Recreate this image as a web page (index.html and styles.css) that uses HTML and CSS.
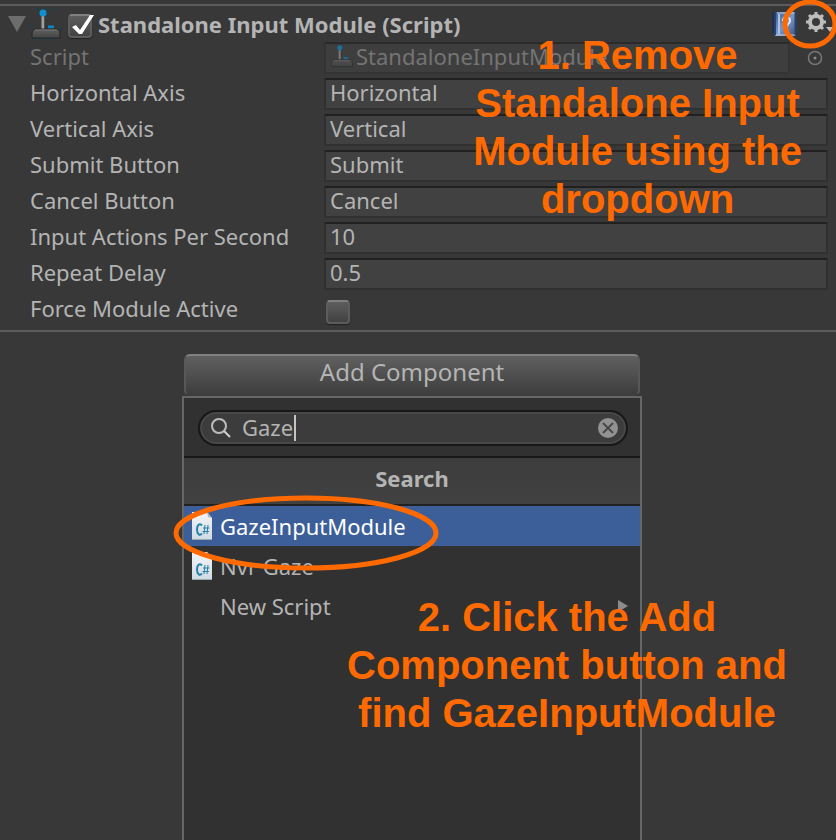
FILE: index.html
```html
<!DOCTYPE html>
<html lang="en">
<head>
<meta charset="utf-8">
<meta name="viewport" content="width=device-width, initial-scale=1">
<title>Inspector</title>
<link rel="stylesheet" href="styles.css">
</head>
<body>
<svg class="symbols" aria-hidden="true">
  <defs>
    <linearGradient id="base" x1="0" y1="0" x2="0" y2="1"><stop offset="0" stop-color="#606060"/><stop offset="1" stop-color="#454545"/></linearGradient>
    <linearGradient id="page" x1="0" y1="0" x2="0" y2="1"><stop offset="0" stop-color="#f4f6f7"/><stop offset="1" stop-color="#cfdae2"/></linearGradient>
    <linearGradient id="book" x1="0" y1="0" x2="1" y2="1"><stop offset="0" stop-color="#3f5c8e"/><stop offset=".5" stop-color="#7897c6"/><stop offset="1" stop-color="#3a5282"/></linearGradient>
    <symbol id="joystick" viewBox="0 0 32 32">
      <path d="M5 1h22M1 16v5M31 18v4M3 31h24" stroke="#174252" stroke-width="1" stroke-dasharray="5 3"/>
      <path d="M13 8v13" stroke="#a0a0a0" stroke-width="3"/>
      <path d="M15 8v12" stroke="#333" stroke-width="1"/>
      <circle cx="13" cy="5" r="3.500" fill="#1190d0"/>
      <path d="M18 19h6" stroke="#0b88c4" stroke-width="3"/>
      <path d="M2 30v-5q0-4 4-4h20q4 0 4 4v5z" fill="url(#base)" stroke="#252525" stroke-width="1"/>
      <path d="M5 22h22" stroke="#777" stroke-width="1"/>
    </symbol>
    <symbol id="script" viewBox="0 0 20 28">
      <path d="M0 0h15l5 6v22H0z" fill="url(#page)"/>
      <path d="M15 0l5 6-4-1z" fill="#a9b4bd"/>
      <path d="M0 27.500h20" stroke="#9eaab3"/>
      <path d="M10 13.500C8 11 5 12.500 5 17.500s3 6.500 5 4" fill="none" stroke="#2580ab" stroke-width="2"/>
      <path d="M13 13l-1 9M16 13l-1 9M11 16h6.500M10.500 19.500h6.500" fill="none" stroke="#2580ab" stroke-width="1"/>
    </symbol>
  </defs>
</svg>

<main class="inspector">
  <section class="component">
    <header class="component-head">
      <button class="icon-button fold" type="button" aria-label="Collapse component">
        <svg width="18" height="16" viewBox="0 0 18 16"><path d="M0 0h18L9 16z" fill="#6d6d6d"/></svg>
      </button>
      <svg class="joystick" aria-hidden="true"><use href="#joystick"/></svg>
      <label class="check">
        <input type="checkbox" id="enabled" checked aria-label="Component enabled">
        <svg class="tick" width="24" height="24" viewBox="0 0 24 24" aria-hidden="true"><path d="M2 13l4-2 4 5L20 1h4L12 20H9z" fill="#fff"/></svg>
      </label>
      <h1>Standalone Input Module (Script)</h1>
      <button class="icon-button" type="button" aria-label="Help">
        <svg width="26" height="26" viewBox="0 0 26 26"><path d="M1 2l4-2v25l-4-3z" fill="#1f3150"/><rect x="4" y="1" width="21" height="24" fill="url(#book)"/><path d="M6 2h19M5 24h19" stroke="#c2d5ed" stroke-width="1"/><path d="M4 1v23M24.500 1v23" stroke="#29406a" stroke-width="2"/><path d="M8 3v20" stroke="#a9c3e6" stroke-width="2"/><path d="M12 10c0-5 7-5 7 0 0 3-3 2-3 6M16 18v3" fill="none" stroke="#dce8fa" stroke-width="2"/></svg>
      </button>
      <button class="icon-button gear" type="button" aria-label="Component options">
        <svg width="28" height="24" viewBox="0 0 28 24"><g fill="none" stroke="#bdbdbd"><circle cx="11" cy="10" r="6" stroke-width="4"/><path d="M11 0v4M11 16v4M1 10h4M17 10h4M4 3l3 3M15 14l3 3M4 17l3-3M15 6l3-3" stroke-width="3"/></g><path d="M21 15h7l-3 5z" fill="#bdbdbd"/></svg>
      </button>
      <svg class="ring" width="56" height="50" viewBox="0 0 56 50" aria-hidden="true"><ellipse cx="28" cy="25" rx="25" ry="22" fill="none" stroke="#ff6a00" stroke-width="5"/></svg>
    </header>

    <div class="row muted">
      <span>Script</span>
      <div class="object">
        <div class="field object-field"><svg class="joystick small" aria-hidden="true"><use href="#joystick"/></svg><span>StandaloneInputModule</span></div>
        <button class="icon-button picker" type="button" aria-label="Select script">
          <svg width="16" height="16" viewBox="0 0 16 16"><circle cx="8" cy="8" r="6.500" fill="none" stroke="#777" stroke-width="1.500"/><circle cx="8" cy="8" r="1.500" fill="#888"/></svg>
        </button>
      </div>
    </div>
    <div class="row"><label for="horizontal">Horizontal Axis</label><input class="field" id="horizontal" value="Horizontal"></div>
    <div class="row"><label for="vertical">Vertical Axis</label><input class="field" id="vertical" value="Vertical"></div>
    <div class="row"><label for="submit">Submit Button</label><input class="field" id="submit" value="Submit"></div>
    <div class="row"><label for="cancel">Cancel Button</label><input class="field" id="cancel" value="Cancel"></div>
    <div class="row"><label for="actions">Input Actions Per Second</label><input class="field" id="actions" value="10"></div>
    <div class="row"><label for="delay">Repeat Delay</label><input class="field" id="delay" value="0.5"></div>
    <div class="row"><label for="force">Force Module Active</label><span class="check-cell"><input type="checkbox" id="force"></span></div>
    <p class="note note-remove">1. Remove<br>Standalone Input<br>Module using the<br>dropdown</p>
  </section>

  <section class="add">
    <button class="add-button" type="button">Add Component</button>
    <div class="popup">
      <div class="search-area">
        <div class="search">
          <svg width="24" height="24" viewBox="0 0 24 24" aria-hidden="true"><circle cx="9" cy="10" r="7" fill="none" stroke="#bdbdbd" stroke-width="2"/><path d="M14 15l6 6" stroke="#d0d0d0" stroke-width="2"/></svg>
          <div class="query"><input id="query" value="Gaze" size="4" aria-label="Search components"><span class="caret"></span></div>
          <button class="icon-button" type="button" aria-label="Clear search">
            <svg width="20" height="20" viewBox="0 0 20 20"><circle cx="10" cy="10" r="10" fill="#929292"/><path d="M5 5l10 10M15 5L5 15" stroke="#484848" stroke-width="2"/></svg>
          </button>
        </div>
      </div>
      <h2>Search</h2>
      <ul>
        <li><button class="item selected" type="button"><svg class="file" aria-hidden="true"><use href="#script"/></svg><span>GazeInputModule</span></button></li>
        <li><button class="item" type="button"><svg class="file" aria-hidden="true"><use href="#script"/></svg><span>Nvr Gaze</span></button></li>
        <li><button class="item" type="button"><span class="file"></span><span>New Script</span><svg class="more" width="10" height="12" viewBox="0 0 10 12" aria-hidden="true"><path d="M0 0l10 6-10 6z" fill="#8c8c8c"/></svg></button></li>
      </ul>
      <svg class="oval" width="266" height="78" viewBox="0 0 266 78" aria-hidden="true"><ellipse cx="133" cy="39" rx="130" ry="35" fill="none" stroke="#ff6a00" stroke-width="5"/></svg>
      <p class="note note-add">2. Click the Add<br>Component button and<br>find GazeInputModule</p>
    </div>
  </section>
</main>
</body>
</html>
```

FILE: styles.css
```css
* { box-sizing: border-box; }

body {
  margin: 0;
  background: #383838;
  color: #b4b4b4;
  font: 22px/32px "Noto Sans", "Open Sans", sans-serif;
}

h1, h2, p, ul { margin: 0; padding: 0; }
ul { list-style: none; }
button, input { font: inherit; color: inherit; }
.symbols { position: absolute; width: 0; height: 0; }

.inspector {
  display: flex;
  flex-direction: column;
  min-height: 100vh;
  padding-top: 4px;
  overflow: hidden;
}

.component {
  position: relative;
  border-top: 2px solid #5c5c5c;
  border-bottom: 2px solid #5c5c5c;
}

.component-head {
  position: relative;
  display: flex;
  align-items: center;
  height: 36px;
  padding-left: 8px;
}

.component-head h1 {
  flex: 1;
  margin-left: 6px;
  font-size: 22px;
  line-height: 36px;
  white-space: nowrap;
}

.icon-button {
  display: flex;
  flex: none;
  padding: 0;
  border: 0;
  background: none;
}

.joystick { flex: none; width: 32px; height: 32px; margin: 0 6px 0 4px; }
.joystick.small { width: 24px; height: 24px; margin: 0 2px 0 0; opacity: .6; }
.gear { margin-left: 8px; margin-right: 3px; }

.check { position: relative; display: flex; padding-top: 4px; }
.tick { position: absolute; left: 2px; top: 4px; }

input[type="checkbox"] {
  appearance: none;
  width: 24px;
  height: 24px;
  margin: 0;
  border: 2px solid #5c5c5c;
  border-top-color: #808080;
  border-radius: 4px;
  background: linear-gradient(#5d5d5d, #424242);
  box-shadow: 0 1px 1px #202020;
}

.row {
  display: grid;
  grid-template-columns: 294px 1fr;
  align-items: start;
  height: 36px;
  padding: 0 8px 0 30px;
}

.row > :first-child { line-height: 28px; white-space: nowrap; }
.muted { color: #747474; }

.field {
  width: 100%;
  min-width: 0;
  height: 32px;
  padding: 0 4px 4px;
  border: 2px solid #303030;
  border-top-color: #202020;
  border-radius: 0;
  background: #414141;
  line-height: 24px;
  outline: 0;
}

.object { display: flex; align-items: center; }
.object-field { display: flex; flex: 1; align-items: center; overflow: hidden; }
.muted .field { border-color: #343434; border-top-color: #2a2a2a; background: #3e3e3e; }
.picker { margin: 0 5px 0 17px; }
.check-cell { display: flex; padding: 6px 2px; }

.add {
  display: flex;
  flex: 1;
  flex-direction: column;
  align-items: center;
  padding: 22px 12px 0 0;
}

.add-button {
  width: 456px;
  height: 42px;
  padding: 0 0 6px;
  border: 2px solid #585858;
  border-top-color: #828282;
  border-bottom-color: #3e3e3e;
  border-radius: 6px;
  background: linear-gradient(#606060, #3e3e3e);
  font-size: 24px;
  line-height: 32px;
}

.popup {
  position: relative;
  flex: 1;
  width: 460px;
  border: 2px solid #666;
  border-bottom: 0;
  background: #313131;
}

.search-area { padding: 12px 12px 10px 14px; }

.search {
  display: flex;
  align-items: center;
  height: 36px;
  padding: 0 8px 0 10px;
  border: 2px solid #181818;
  border-radius: 18px;
  background: #3c3c3c;
  box-shadow: inset 0 0 0 2px #484848;
}

.query { display: flex; flex: 1; align-items: center; margin-left: 8px; }
.query input { width: 52px; padding: 0 0 2px; border: 0; outline: 0; background: none; line-height: 28px; }
.caret { width: 2px; height: 26px; background: #c4c4c4; }

.popup h2 {
  height: 50px;
  border-top: 2px solid #181818;
  border-bottom: 2px solid #222;
  background: linear-gradient(#3d3d3d, #414141);
  font-size: 22px;
  line-height: 40px;
  text-align: center;
}

.item {
  display: flex;
  align-items: center;
  width: 100%;
  height: 40px;
  padding: 0 12px 0 8px;
  border: 0;
  background: none;
  text-align: left;
}

.item.selected { background: #3d5f99; color: #fff; }
.file { flex: none; width: 20px; height: 28px; margin-right: 8px; }
.more { margin-left: auto; }

.ring, .oval, .note { position: absolute; z-index: 2; pointer-events: none; }
.ring { right: -2px; top: -7px; }
.oval { left: -11px; top: 96px; }

.note {
  color: #ff6a00;
  font: bold 40px/48px "Liberation Sans", Arial, sans-serif;
  text-align: center;
  white-space: nowrap;
}

.note-remove { right: 34px; top: 25px; }
.note-add { left: 163px; top: 195px; }
```
